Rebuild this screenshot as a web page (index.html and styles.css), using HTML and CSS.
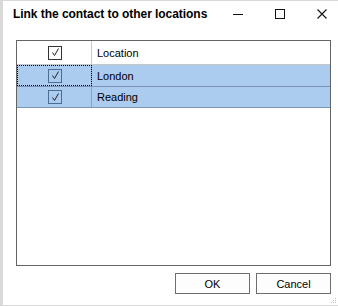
FILE: index.html
```html
<!DOCTYPE html>
<html lang="en">
<head>
  <meta charset="UTF-8" />
  <title>Link the contact to other locations</title>
  <link rel="stylesheet" href="styles.css">
</head>
<body>
  <div class="window">
    <div class="title-bar">
      <div class="title">Link the contact to other locations</div>
      <div class="window-controls">
        <span class="ctl ctl-min"><svg width="10" height="10" viewBox="0 0 10 10"><path d="M0 5.5H10" stroke="#111" stroke-width="1"/></svg></span>
        <span class="ctl ctl-max"><svg width="10" height="10" viewBox="0 0 10 10"><rect x="0.5" y="0.5" width="9" height="9" fill="none" stroke="#111" stroke-width="1"/></svg></span>
        <span class="ctl ctl-close"><svg width="10" height="10" viewBox="0 0 10 10"><path d="M0.5 0.5L9.5 9.5M9.5 0.5L0.5 9.5" stroke="#111" stroke-width="1.1"/></svg></span>
      </div>
    </div>

    <div class="content">
      <div class="grid">
        <div class="grid-row header-row">
          <div class="cell check-cell">
            <span class="checkbox"><svg width="9" height="9" viewBox="0 0 9 9"><path d="M1.5 4.5L3.5 7.5L7.5 0.5" fill="none" stroke="#222" stroke-width="1"/></svg></span>
          </div>
          <div class="cell text-cell">Location</div>
        </div>
        <div class="grid-row selected">
          <div class="cell check-cell focused">
            <span class="checkbox"><svg width="9" height="9" viewBox="0 0 9 9"><path d="M1.5 4.5L3.5 7.5L7.5 0.5" fill="none" stroke="#222" stroke-width="1"/></svg></span>
          </div>
          <div class="cell text-cell">London</div>
        </div>
        <div class="grid-row selected">
          <div class="cell check-cell">
            <span class="checkbox"><svg width="9" height="9" viewBox="0 0 9 9"><path d="M1.5 4.5L3.5 7.5L7.5 0.5" fill="none" stroke="#222" stroke-width="1"/></svg></span>
          </div>
          <div class="cell text-cell">Reading</div>
        </div>
      </div>

      <div class="button-row">
        <button class="btn">OK</button>
        <button class="btn">Cancel</button>
      </div>
    </div>
    <div class="grip">
      <svg width="6" height="6" viewBox="0 0 6 6"><rect x="4" y="0" width="1" height="1" fill="#bbb"/><rect x="2" y="2" width="1" height="1" fill="#bbb"/><rect x="4" y="2" width="1" height="1" fill="#bbb"/><rect x="0" y="4" width="1" height="1" fill="#bbb"/><rect x="2" y="4" width="1" height="1" fill="#bbb"/><rect x="4" y="4" width="1" height="1" fill="#bbb"/></svg>
    </div>
  </div>
</body>
</html>
```

FILE: styles.css
```css
* {
  box-sizing: border-box;
  margin: 0;
  padding: 0;
}

body {
  font-family: 'Liberation Sans', Arial, sans-serif;
  background-color: #ffffff;
  color: #000;
  width: 338px;
  height: 306px;
  overflow: hidden;
}

.window {
  position: relative;
  width: 338px;
  height: 306px;
  background: #ffffff;
  border-left: 3px solid #d9d9d9;
  border-top: 1px solid #d9d9d9;
  border-bottom: 1px solid #d9d9d9;
  display: flex;
  flex-direction: column;
}

.title-bar {
  display: flex;
  align-items: center;
  justify-content: space-between;
  height: 26px;
  padding-left: 10px;
  padding-right: 6px;
}

.title {
  font-weight: bold;
  font-size: 12px;
  color: #000;
  letter-spacing: -0.05px;
}

.window-controls {
  display: flex;
  height: 100%;
  align-items: center;
  gap: 22px;
}

.ctl {
  display: flex;
  align-items: center;
  justify-content: center;
  width: 20px;
  height: 100%;
}

.content {
  flex: 1;
  display: flex;
  flex-direction: column;
  padding: 13px 7px 0 13px;
}

.grid {
  height: 226px;
  border: 1px solid #646464;
  background: #ffffff;
}

.grid-row {
  display: flex;
  height: 22px;
  border-bottom: 1px solid #7c93b4;
}

.header-row {
  height: 24px;
  border-bottom: 1px solid #c8c8c8;
  background: #ffffff;
}

.selected {
  background: #abcbef;
}

.selected:last-child {
  height: 21px;
}

.cell {
  display: flex;
  align-items: center;
  font-size: 11px;
}

.check-cell {
  width: 75px;
  justify-content: center;
  border-right: 1px solid #c8c8c8;
  padding-left: 2px;
}

.selected .check-cell {
  border-right-color: #8aa4c6;
}

.focused {
  outline: 1px dotted #000;
  outline-offset: -1px;
}

.text-cell {
  padding-left: 5px;
}

.checkbox {
  display: flex;
  align-items: center;
  justify-content: center;
  width: 14px;
  height: 14px;
  border: 1px solid #333;
  background: #fff;
}

.selected .checkbox {
  border-color: #4e6d95;
  background: #abcbef;
}

.button-row {
  display: flex;
  justify-content: flex-end;
  gap: 6px;
  margin-top: 7px;
}

.btn {
  width: 75px;
  height: 21px;
  font-family: 'Liberation Sans', Arial, sans-serif;
  font-size: 11px;
  color: #000;
  background: #fdfdfd;
  border: 1px solid #6e6e6e;
}

.grip {
  position: absolute;
  right: 1px;
  bottom: 1px;
  width: 6px;
  height: 6px;
  line-height: 0;
}
```
